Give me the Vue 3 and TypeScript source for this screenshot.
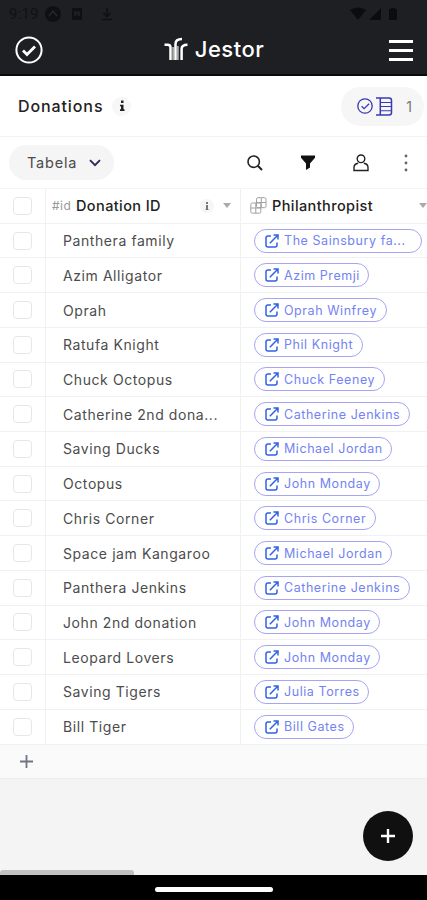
<script setup lang="ts">
interface Donation {
  name: string
  philanthropist: string
  truncated?: boolean
}

const donations: Donation[] = [
  { name: 'Panthera family', philanthropist: 'The Sainsbury fa...', truncated: true },
  { name: 'Azim Alligator', philanthropist: 'Azim Premji' },
  { name: 'Oprah', philanthropist: 'Oprah Winfrey' },
  { name: 'Ratufa Knight', philanthropist: 'Phil Knight' },
  { name: 'Chuck Octopus', philanthropist: 'Chuck Feeney' },
  { name: 'Catherine 2nd dona...', philanthropist: 'Catherine Jenkins' },
  { name: 'Saving Ducks', philanthropist: 'Michael Jordan' },
  { name: 'Octopus', philanthropist: 'John Monday' },
  { name: 'Chris Corner', philanthropist: 'Chris Corner' },
  { name: 'Space jam Kangaroo', philanthropist: 'Michael Jordan' },
  { name: 'Panthera Jenkins', philanthropist: 'Catherine Jenkins' },
  { name: 'John 2nd donation', philanthropist: 'John Monday' },
  { name: 'Leopard Lovers', philanthropist: 'John Monday' },
  { name: 'Saving Tigers', philanthropist: 'Julia Torres' },
  { name: 'Bill Tiger', philanthropist: 'Bill Gates' },
]
</script>

<template>
  <div class="screen">
    <header class="top">
      <div class="status">
        <span class="time">9:19</span>
        <svg class="s-app" viewBox="0 0 16 16"><circle cx="8" cy="8" r="8" fill="#0f1013" /><path d="M4 10 8 5l4 5" fill="none" stroke="#24262b" stroke-width="1.6" /></svg>
        <svg class="s-box" viewBox="0 0 10 12"><rect width="10" height="12" rx="1" fill="#0f1013" /><path d="M3 8V4h4v4M3 6h4" fill="none" stroke="#24262b" stroke-width="1.2" /></svg>
        <svg class="s-down" viewBox="0 0 12 14"><path d="M6 1v8M2.5 6 6 9.500 9.500 6M1 12.500h10" fill="none" stroke="#0f1013" stroke-width="1.600" /></svg>
        <svg class="s-signals" viewBox="0 0 48 14"><path d="M0 3Q8-2 16 3L8 13zM31 1v12H19zM41 2V1h4v1h2v11h-8V2z" fill="#0b0c0f" /></svg>
      </div>
      <div class="nav">
        <svg class="check" viewBox="0 0 28 28" fill="none" stroke="#fff"><circle cx="14" cy="14" r="12.600" stroke-width="2" /><path d="m8 14.500 4 4 8-8" stroke-width="2.800" /></svg>
        <div class="brand">
          <svg viewBox="0 0 24 24" fill="none">
            <path d="M9.200 10v13M13.800 9v14" stroke="#a9a9ab" stroke-width="2" />
            <path d="M.5 7.700h3.200Q6.500 7.700 6.500 10.500V23M11.500 23V7Q11.500 2 18 2M17.600 23V12Q17.600 7.700 23.500 7.700" stroke="#fff" stroke-width="2.500" />
          </svg>
          <span>Jestor</span>
        </div>
        <div class="burger"><i></i><i></i><i></i></div>
      </div>
    </header>

    <section class="title">
      <h1>Donations</h1>
      <span class="info">
        <svg viewBox="0 0 6 12" fill="#222"><path d="M2 .5h2.500v2.500H2zM1 4.700h3.500v4.600h1v1.700H1V9.300h1V6.200H1z" /></svg>
      </span>
      <div class="views">
        <svg class="v-check" viewBox="0 0 16 16" fill="none" stroke="#3a3ab4" stroke-width="1.300"><circle cx="8" cy="8" r="7.200" /><path d="m4.600 8.200 2.500 2.500 5-5" /></svg>
        <svg class="v-table" viewBox="0 0 17 19" fill="none" stroke="#3a3ab4"><path d="M0 1h13Q15.500 1 15.500 3.500v12Q15.500 18 13 18H0M4.300 1v17" stroke-width="1.500" /><path d="M4.300 5.500h11M4.300 9.500h11M4.300 13.700h11" stroke-width="1.100" /></svg>
        <span>1</span>
      </div>
    </section>

    <section class="tools">
      <button class="select">Tabela
        <svg viewBox="0 0 12 8" fill="none" stroke="#282c5a" stroke-width="1.900"><path d="m1 1.200 5 5 5-5" /></svg>
      </button>
      <svg class="search" viewBox="0 0 16 16" fill="none" stroke="#222" stroke-width="1.600"><circle cx="6.700" cy="6.700" r="5.700" /><path d="m10.800 10.800 4.200 4.200" stroke-width="2" /></svg>
      <svg class="filter" viewBox="0 0 14 15"><path d="M0 .500h14v2.300L9 8.500v4L5 15V8.500L0 2.800z" fill="#111" /></svg>
      <svg class="person" viewBox="0 0 16 18" fill="none" stroke="#222" stroke-width="1.400"><circle cx="8" cy="4.800" r="3.800" /><path d="M5.200 9.200Q1 9.800 1 13.500v3h14v-3Q15 9.800 10.800 9.200" /></svg>
      <svg class="dots" viewBox="0 0 4 18" fill="#666"><circle cx="2" cy="2" r="1.400" /><circle cx="2" cy="9" r="1.400" /><circle cx="2" cy="16" r="1.400" /></svg>
    </section>

    <main class="table">
      <div class="row head">
        <div class="cell pick"><span class="box"></span></div>
        <div class="cell col-id">
          <span class="hash">#id</span><b>Donation ID</b>
          <span class="mini-info"><svg viewBox="0 0 4 8" fill="#777"><path d="M1 0h2v2H1zM1 3h2v4h.5v1h-3V7H1z" /></svg></span>
          <span class="caret"></span>
        </div>
        <div class="cell col-person">
          <svg class="link-icon" viewBox="0 0 17 17" fill="none" stroke="#a2a2a2" stroke-width="1"><rect x="6.500" y=".7" width="9.500" height="10" rx="1.500" /><rect x=".8" y="6" width="10" height="10.200" rx="1.500" /><path d="M11.300 1v9.500M6.500 5.500H16M5.800 6v10M1 11h9.800" /></svg>
          <b>Philanthropist</b>
          <span class="caret"></span>
        </div>
      </div>
      <div v-for="(d, i) in donations" :key="i" class="row">
        <div class="cell pick"><span class="box"></span></div>
        <div class="cell col-name">{{ d.name }}</div>
        <div class="cell col-person">
          <span class="chip" :class="{ truncated: d.truncated }">
            <svg viewBox="0 0 14 14" fill="none" stroke="#2f62e4" stroke-width="1.500"><path d="M6 2H3Q1 2 1 4v7q0 2 2 2h7q2 0 2-2V8.500M4.800 9.200 12.500 1.500M8.500 1H13v4.500" /></svg>
            {{ d.philanthropist }}
          </span>
        </div>
      </div>
      <div class="add-row">
        <svg viewBox="0 0 13 13" stroke="#6f7480" stroke-width="1.800"><path d="M6.500 0v13M0 6.500h13" /></svg>
      </div>
    </main>

    <div class="rest">
      <button class="fab"><svg viewBox="0 0 14 14" stroke="#fff" stroke-width="2.400"><path d="M7 0v14M0 7h14" /></svg></button>
      <span class="scroll"></span>
    </div>
    <footer><span></span></footer>
  </div>
</template>

<style>
body {
  background: #fff;
}
</style>

<style scoped>
.screen {
  width: 427px;
  height: 900px;
  display: flex;
  flex-direction: column;
  overflow: hidden;
  font-family: Inter, sans-serif;
  color: #4c4c4c;
}
svg {
  display: block;
  flex: none;
}
button {
  border: 0;
  padding: 0;
  font: inherit;
  color: inherit;
}
.top {
  height: 76px;
  flex: none;
  box-sizing: border-box;
  background: #1e1f23;
  border-bottom: 2px solid #090a0c;
}
.status {
  height: 28px;
  display: flex;
  align-items: center;
  padding: 0 29px 0 9px;
  color: #101114;
}
.time {
  width: 36px;
  font: 15px/28px Roboto, sans-serif;
  letter-spacing: 0.2px;
}
.s-app { width: 16px; height: 16px; }
.s-box { width: 10px; height: 12px; margin-left: 11px; }
.s-down { width: 12px; height: 14px; margin-left: 19px; }
.s-signals { width: 48px; height: 14px; margin-left: auto; }
.nav {
  height: 44px;
  display: flex;
  align-items: center;
  justify-content: space-between;
  padding: 0 14px 0 15px;
}
.check { width: 28px; height: 28px; }
.brand {
  display: flex;
  align-items: center;
  gap: 7px;
  margin-right: 4px;
  color: #fff;
  font-size: 22px;
  line-height: 26px;
  font-weight: 500;
  letter-spacing: 0.5px;
}
.brand svg { width: 24px; height: 24px; margin-top: -2px; }
.brand span { margin-top: -2px; }
.burger {
  width: 24px;
  display: grid;
  gap: 6px;
}
.burger i {
  height: 3px;
  background: #fff;
}
.title {
  height: 60px;
  flex: none;
  display: flex;
  align-items: center;
  border-bottom: 1px solid #f2f2f2;
  padding: 0 3px 0 18px;
}
h1 {
  margin: 0;
  width: 94px;
  color: #222;
  font-size: 16px;
  font-weight: 500;
  letter-spacing: 0.9px;
}
.info {
  width: 19px;
  height: 19px;
  border-radius: 50%;
  background: #f7f7f7;
  display: grid;
  place-items: center;
}
.info svg { width: 6px; height: 12px; }
.views {
  width: 83px;
  height: 39px;
  margin-left: auto;
  box-sizing: border-box;
  padding: 0 12px 0 16px;
  border-radius: 20px;
  background: #f6f6f6;
  display: flex;
  align-items: center;
  font-size: 14px;
}
.v-check { width: 16px; height: 16px; }
.v-table { width: 17px; height: 19px; margin-left: 3px; }
.views span { margin-left: auto; color: #777; }
.tools {
  height: 51px;
  flex: none;
  display: flex;
  align-items: center;
  padding: 0 19px 0 9px;
}
.select {
  width: 105px;
  height: 35px;
  padding: 0 13px 0 18px;
  border-radius: 18px;
  background: #f5f5f5;
  display: flex;
  align-items: center;
  justify-content: space-between;
  font-size: 14.500px;
  letter-spacing: 0.8px;
}
.select svg { width: 12px; height: 8px; }
.search { width: 16px; height: 16px; margin-left: 133px; }
.filter { width: 14px; height: 15px; margin-left: 38px; }
.person { width: 16px; height: 18px; margin-left: 38px; }
.dots { width: 4px; height: 18px; margin-left: auto; }
.table {
  flex: none;
  border-top: 1px solid #f4f4f4;
}
.row {
  height: 34.720px;
  display: grid;
  grid-template-columns: 46px 195px 186px;
}
.cell {
  box-sizing: border-box;
  min-width: 0;
  display: flex;
  align-items: center;
  border-right: 1px solid #f0f1f3;
  border-bottom: 1px solid #f0f1f3;
  white-space: nowrap;
}
.pick { padding-left: 13px; }
.box {
  width: 19px;
  height: 18px;
  box-sizing: border-box;
  border: 1px solid #e5e7e8;
  border-radius: 4px;
}
.col-name {
  padding-left: 17px;
  font-size: 14px;
  letter-spacing: 0.580px;
}
.col-person {
  padding-left: 13px;
  border-right: 0;
}
.head .col-id { padding: 0 9px 0 6px; }
.head .col-person { padding: 0 0 0 9px; }
.head b {
  color: #222;
  font-size: 14.500px;
  font-weight: 500;
  letter-spacing: 0.4px;
}
.hash {
  width: 24px;
  color: #999;
  font-size: 12px;
  letter-spacing: 0.5px;
}
.mini-info {
  width: 14px;
  height: 14px;
  margin-left: auto;
  border-radius: 50%;
  background: #f6f6f6;
  display: grid;
  place-items: center;
}
.mini-info svg { width: 4px; height: 8px; }
.caret {
  border: 4px solid transparent;
  border-top: 5px solid #aaa;
  border-bottom: 0;
  margin-left: 9px;
}
.link-icon { width: 17px; height: 17px; margin-right: 5px; }
.head .col-person .caret { margin-left: auto; }
.chip {
  height: 24px;
  box-sizing: border-box;
  border: 1px solid #a5a5f3;
  border-radius: 12px;
  padding: 0 8.500px 0 9.500px;
  display: flex;
  align-items: center;
  gap: 5.500px;
  color: #7483f2;
  font-size: 12.500px;
  letter-spacing: 0.560px;
}
.chip.truncated { padding-right: 15.500px; }
.chip svg { width: 14px; height: 14px; }
.add-row {
  height: 34px;
  box-sizing: border-box;
  border-bottom: 1px solid #ececec;
  background: #fafafa;
  display: flex;
  align-items: center;
  padding-left: 20px;
}
.add-row svg { width: 13px; height: 13px; }
.rest {
  flex: 1;
  position: relative;
  background: #f4f4f4;
}
.fab {
  position: absolute;
  right: 14px;
  bottom: 14px;
  width: 50px;
  height: 50px;
  border-radius: 50%;
  background: #101010;
  display: grid;
  place-items: center;
}
.fab svg { width: 14px; height: 14px; }
.scroll {
  position: absolute;
  left: 0;
  bottom: 0;
  width: 134px;
  height: 5px;
  border-radius: 3px 3px 0 0;
  background: #c1c1c1;
}
footer {
  height: 25px;
  flex: none;
  background: #000;
  display: flex;
  justify-content: center;
}
footer span {
  width: 118px;
  height: 5px;
  margin-top: 12px;
  border-radius: 3px;
  background: #fff;
}
</style>
